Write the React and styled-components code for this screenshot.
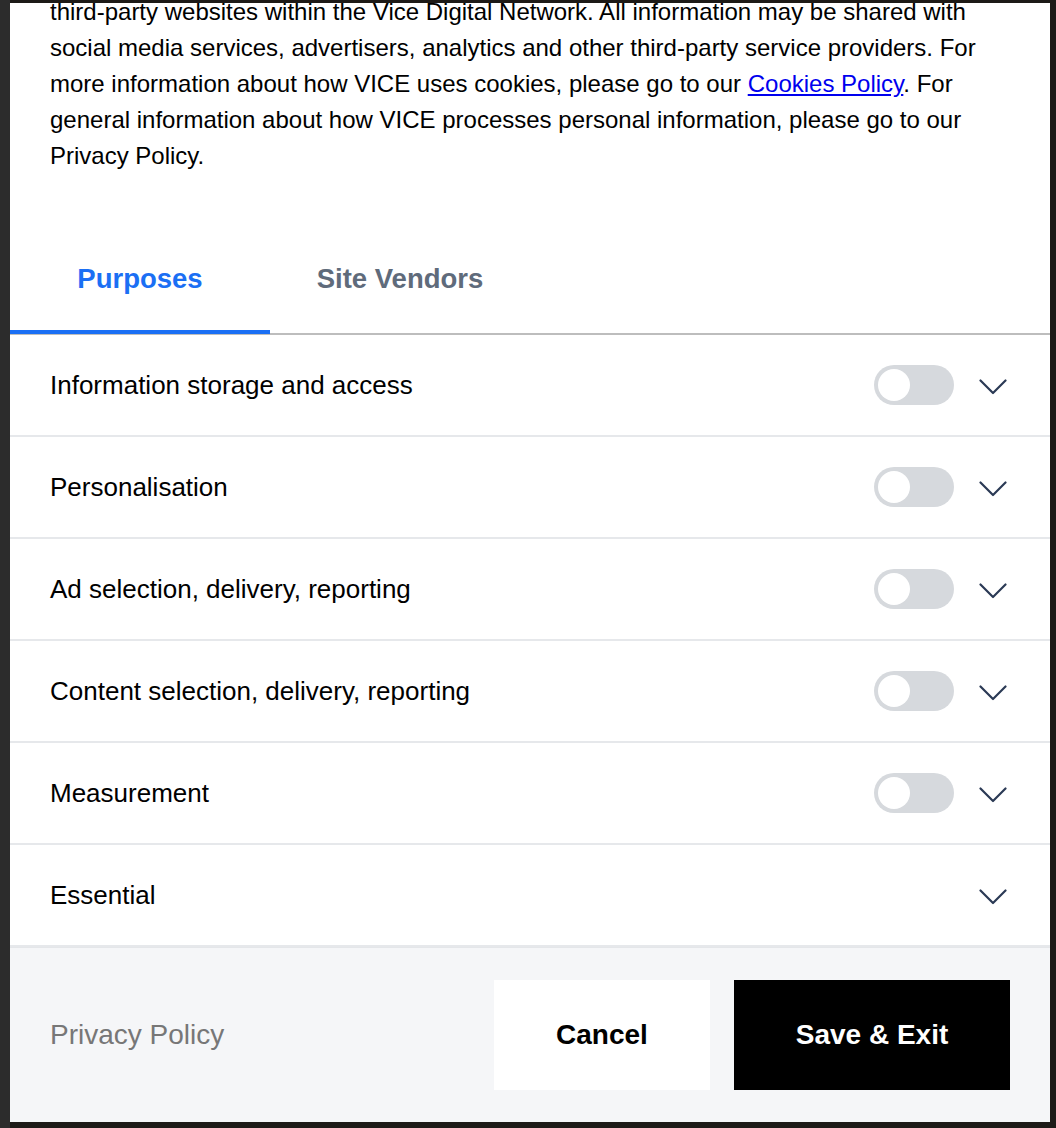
import styled, { createGlobalStyle } from "styled-components";

const purposes = [
  { label: "Information storage and access", toggle: true },
  { label: "Personalisation", toggle: true },
  { label: "Ad selection, delivery, reporting", toggle: true },
  { label: "Content selection, delivery, reporting", toggle: true },
  { label: "Measurement", toggle: true },
  { label: "Essential", toggle: false },
];

export default function App() {
  return (
    <>
      <GlobalStyle />
      <StyledBackdrop>
        <StyledModal>
          <StyledIntro>
            third-party websites within the Vice Digital Network. All
            information may be shared with social media services, advertisers,
            analytics and other third-party service providers. For more
            information about how VICE uses cookies, please go to our{" "}
            <a href="#cookies">Cookies Policy</a>. For general information about
            how VICE processes personal information, please go to our Privacy
            Policy.
          </StyledIntro>

          <StyledTabList>
            <StyledTab $active>Purposes</StyledTab>
            <StyledTab>Site Vendors</StyledTab>
          </StyledTabList>

          <StyledList>
            {purposes.map((item) => (
              <StyledRow key={item.label}>
                <StyledRowLabel>{item.label}</StyledRowLabel>
                <StyledControls>
                  {item.toggle && (
                    <StyledToggle>
                      <StyledKnob />
                    </StyledToggle>
                  )}
                  <Chevron />
                </StyledControls>
              </StyledRow>
            ))}
          </StyledList>

          <StyledFooter>
            <StyledFooterLink>Privacy Policy</StyledFooterLink>
            <StyledButtons>
              <StyledCancel>Cancel</StyledCancel>
              <StyledSave>Save &amp; Exit</StyledSave>
            </StyledButtons>
          </StyledFooter>
        </StyledModal>
      </StyledBackdrop>
    </>
  );
}

function Chevron() {
  return (
    <StyledChevron width="28" height="16" viewBox="0 0 28 16">
      <polyline
        points="1.5,1.5 14,14 26.5,1.5"
        fill="none"
        stroke="#2b3a55"
        strokeWidth="2.2"
        strokeLinecap="round"
        strokeLinejoin="round"
      />
    </StyledChevron>
  );
}

const GlobalStyle = createGlobalStyle`
  body {
    margin: 0;
    background: #1d1a17;
    font-family: "Liberation Sans", Arial, sans-serif;
  }
`;

const StyledBackdrop = styled.div`
  height: 1128px;
  padding: 3px 6px 6px 10px;
  box-sizing: border-box;
  background: linear-gradient(90deg, #2c2c2c 0 10px, #1d1a17 10px);
`;

const StyledModal = styled.div`
  height: 100%;
  background: #fff;
  overflow: hidden;
  display: flex;
  flex-direction: column;
`;

const StyledIntro = styled.p`
  margin: -9px 0 0;
  padding: 0 70px 0 40px;
  font-size: 24px;
  line-height: 36px;
  color: #000;

  a {
    color: #0000ee;
    text-decoration: underline;
  }
`;

const StyledTabList = styled.div`
  display: flex;
  margin-top: 61px;
  border-bottom: 2px solid #bdbdbd;
`;

const StyledTab = styled.div`
  width: 260px;
  text-align: center;
  padding: 29px 0 36px;
  line-height: 30px;
  font-size: 27.5px;
  font-weight: 700;
  color: ${(p) => (p.$active ? "#1b6ff4" : "#5f6b7b")};
  border-bottom: 4px solid ${(p) => (p.$active ? "#1b6ff4" : "transparent")};
  margin-bottom: -1px;
`;

const StyledList = styled.div`
  display: flex;
  flex-direction: column;
`;

const StyledRow = styled.div`
  height: 100px;
  display: flex;
  align-items: center;
  justify-content: space-between;
  padding: 0 43px 0 40px;
  border-bottom: 2px solid #e6e8eb;
`;

const StyledRowLabel = styled.span`
  font-size: 26px;
  color: #000;
`;

const StyledControls = styled.div`
  display: flex;
  align-items: center;
  gap: 25px;
`;

const StyledToggle = styled.div`
  width: 80px;
  height: 40px;
  border-radius: 20px;
  background: #d6d9dd;
  display: flex;
  align-items: center;
  padding-left: 4px;
  box-sizing: border-box;
`;

const StyledKnob = styled.div`
  width: 32px;
  height: 32px;
  border-radius: 50%;
  background: #fff;
`;

const StyledChevron = styled.svg`
  display: block;
  margin-top: 3px;
`;

const StyledFooter = styled.div`
  flex: 1;
  background: #f5f6f8;
  border-top: 1px solid #e4e6e9;
  display: flex;
  align-items: center;
  justify-content: space-between;
  padding: 0 40px;
`;

const StyledFooterLink = styled.span`
  font-size: 28px;
  color: #777;
`;

const StyledButtons = styled.div`
  display: flex;
  gap: 24px;
`;

const StyledCancel = styled.button`
  width: 216px;
  height: 110px;
  border: none;
  background: #fff;
  color: #000;
  font-family: inherit;
  font-size: 28px;
  font-weight: 700;
`;

const StyledSave = styled(StyledCancel)`
  width: 276px;
  background: #000;
  color: #fff;
`;
